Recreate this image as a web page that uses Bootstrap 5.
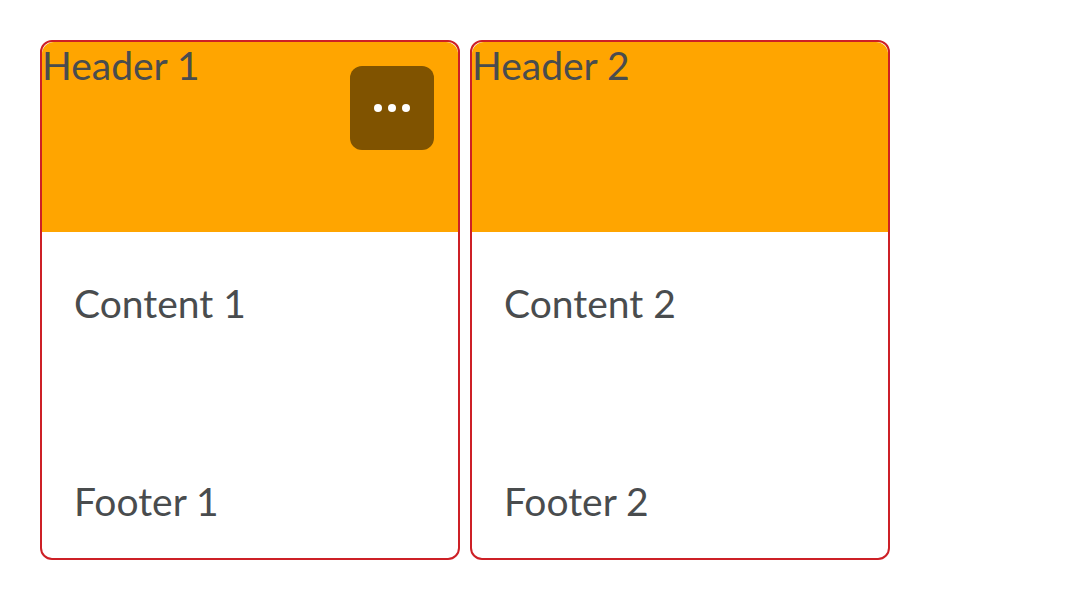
<!DOCTYPE html>
<html lang="en">
<head>
<meta charset="utf-8">
<meta name="viewport" content="width=device-width, initial-scale=1">
<title>Cards</title>
<link href="https://cdn.jsdelivr.net/npm/bootstrap@5.3.0/dist/css/bootstrap.min.css" rel="stylesheet">
<style>
body { font-family: Lato, sans-serif; font-size: 39px; line-height: 46px; color: #494c4e; }
.page { padding: 40px; gap: 10px; }
.tile { width: 420px; min-height: 520px; border: 2px solid #cd2026; border-radius: 12px; --bs-card-color: #494c4e; --bs-card-inner-border-radius: 12px; }
.tile-head { min-height: 190px; padding: 0; border: 0; background: orange; color: inherit; }
.tile-body { padding: 48px 32px; }
.tile-foot { padding: 0 32px 34px; border: 0; background: none; color: inherit; }
.menu-btn { width: 84px; height: 84px; top: 24px; right: 24px; border-radius: 12px; background: #805300; padding: 0; }
</style>
</head>
<body>
<main class="page d-flex flex-wrap align-items-start">
  <article class="card tile">
    <header class="card-header tile-head">Header 1</header>
    <button type="button" class="menu-btn position-absolute border-0 d-flex align-items-center justify-content-center" aria-label="More options">
      <svg width="36" height="8" viewBox="0 0 36 8" fill="#fff" aria-hidden="true"><circle cx="4" cy="4" r="4"/><circle cx="18" cy="4" r="4"/><circle cx="32" cy="4" r="4"/></svg>
    </button>
    <div class="card-body tile-body">Content 1</div>
    <footer class="card-footer tile-foot">Footer 1</footer>
  </article>
  <article class="card tile">
    <header class="card-header tile-head">Header 2</header>
    <div class="card-body tile-body">Content 2</div>
    <footer class="card-footer tile-foot">Footer 2</footer>
  </article>
</main>
<script src="https://cdn.jsdelivr.net/npm/bootstrap@5.3.0/dist/js/bootstrap.bundle.min.js"></script>
</body>
</html>
